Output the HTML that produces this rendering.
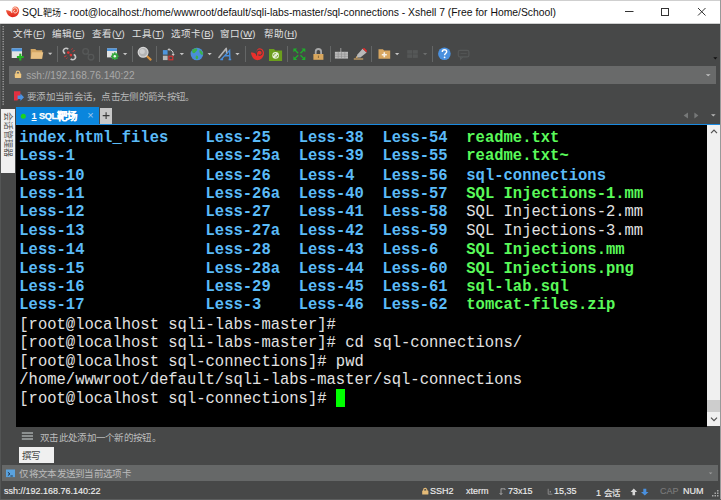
<!DOCTYPE html>
<html lang="zh-CN"><head><meta charset="utf-8">
<style>
*{margin:0;padding:0;box-sizing:border-box}
html,body{width:721px;height:500px;overflow:hidden;background:#474848;font-family:"Liberation Sans",sans-serif;position:relative}
.a{position:absolute;white-space:nowrap}
#title{left:0;top:0;width:721px;height:23.7px;background:#fff;border-top:1px solid #cfcfcf;}
#title .t{left:22px;top:4.8px;font-size:10.36px;color:#111}
.menu{top:26px;font-size:9.5px;color:#e0e0e0}
.menu u{text-decoration-thickness:0.8px;text-underline-offset:1px}
#addr{left:9px;top:66px;width:707px;height:18px;background:#696a6a}
#addr .t{left:17.2px;top:4px;font-size:10.1px;color:#a8a8a8}
#hint{left:27px;top:89.2px;font-size:9.5px;color:#b8b8b8;letter-spacing:-0.7px}
#tab{left:16.3px;top:107px;width:82.6px;height:18px;background:#0a86dd}
#tab .n{left:15.3px;top:3.6px;font-size:9.2px;color:#fff;font-weight:bold;text-decoration:underline;}
#tab .t{left:22.6px;top:-0.2px;font-size:9.2px;letter-spacing:-0.3px;-webkit-text-stroke-width:0.25px;color:#fff;font-weight:bold}
#tab .x{left:71px;top:2px;font-size:11px;color:#9cc8ee}
#plus{left:100px;top:108px;width:12px;height:16px;background:#c8c8c8}
#tabline{left:16px;top:123.5px;width:705px;height:1.5px;background:#1a8ae0}
#side{left:1px;top:109px;width:14px;height:64px;background:#f0f0f0}
#side .t{left:-17px;top:20px;width:48px;font-size:9px;color:#555;transform:rotate(90deg);letter-spacing:0px}
#term{left:16.3px;top:125px;width:691px;height:301.6px;background:#000}
#scroll{left:707px;top:125px;width:13px;height:301.3px;background:#f0f0f0}
#thumb{left:707px;top:400px;width:13px;height:12px;background:#cdcdcd}
pre{position:absolute;left:19.3px;top:129.4px;font-family:"Liberation Mono",monospace;font-size:15.525px;line-height:17.26px;color:#e2e2e2;transform:scaleY(1.08);transform-origin:0 0}
.b{color:#5bbbf8;font-weight:bold}
.g{color:#5afa5a;font-weight:bold}
#cur{left:336px;top:389px;width:9.3px;height:17.8px;background:#00ff00}
#quick{left:40px;top:430px;font-size:9.5px;color:#bdbdbd;letter-spacing:-0.7px}
#compose{left:19px;top:447.3px;width:35px;height:16px;background:#f0f0f0}
#compose span{position:absolute;left:2.6px;top:0.5px;font-size:9.5px;color:#444;letter-spacing:-0.7px}
#send{left:2px;top:464.8px;width:716px;height:16.4px;background:#666868}
#send .t{left:17.4px;top:1.5px;font-size:9.5px;color:#bcbcbc;letter-spacing:-0.7px}
.st{top:486.4px;font-size:9px;color:#ececec;-webkit-text-stroke-width:0.15px}
svg{position:absolute;left:0;top:0}
</style></head><body>
<div id="title" class="a"><div class="t a">SQL<span style="font-size:9px">靶场</span> - root@localhost:/home/wwwroot/default/sqli-labs-master/sql-connections - Xshell 7 (Free for Home/School)</div></div>
<div class="a menu" style="left:13px">文件(<u>F</u>)</div>
<div class="a menu" style="left:52px">编辑(<u>E</u>)</div>
<div class="a menu" style="left:92px">查看(<u>V</u>)</div>
<div class="a menu" style="left:132px">工具(<u>T</u>)</div>
<div class="a menu" style="left:171px">选项卡(<u>B</u>)</div>
<div class="a menu" style="left:220px">窗口(<u>W</u>)</div>
<div class="a menu" style="left:264px">帮助(<u>H</u>)</div>

<div id="addr" class="a"><div class="t a">ssh://192.168.76.140:22</div></div>
<div id="hint" class="a">要添加当前会话，点击左侧的箭头按钮。</div>

<div id="side" class="a"><div class="t a">会话管理器</div></div>
<div id="tab" class="a"><span class="n a">1</span><span class="t a">SQL<span style="font-size:10.4px;position:relative;top:1.2px;letter-spacing:0">靶场</span></span><span class="x a">×</span></div>
<div id="plus" class="a"></div>
<div id="tabline" class="a"></div>
<div id="term" class="a"></div>
<div id="scroll" class="a"></div>
<div id="thumb" class="a"></div>
<pre><span class="b">index.html_files</span>    <span class="b">Less-25</span>   <span class="b">Less-38</span>  <span class="b">Less-54</span>  <span class="g">readme.txt</span>
<span class="b">Less-1</span>              <span class="b">Less-25a</span>  <span class="b">Less-39</span>  <span class="b">Less-55</span>  <span class="g">readme.txt~</span>
<span class="b">Less-10</span>             <span class="b">Less-26</span>   <span class="b">Less-4</span>   <span class="b">Less-56</span>  <span class="b">sql-connections</span>
<span class="b">Less-11</span>             <span class="b">Less-26a</span>  <span class="b">Less-40</span>  <span class="b">Less-57</span>  <span class="g">SQL Injections-1.mm</span>
<span class="b">Less-12</span>             <span class="b">Less-27</span>   <span class="b">Less-41</span>  <span class="b">Less-58</span>  SQL Injections-2.mm
<span class="b">Less-13</span>             <span class="b">Less-27a</span>  <span class="b">Less-42</span>  <span class="b">Less-59</span>  SQL Injections-3.mm
<span class="b">Less-14</span>             <span class="b">Less-28</span>   <span class="b">Less-43</span>  <span class="b">Less-6</span>   <span class="g">SQL Injections.mm</span>
<span class="b">Less-15</span>             <span class="b">Less-28a</span>  <span class="b">Less-44</span>  <span class="b">Less-60</span>  <span class="g">SQL Injections.png</span>
<span class="b">Less-16</span>             <span class="b">Less-29</span>   <span class="b">Less-45</span>  <span class="b">Less-61</span>  <span class="g">sql-lab.sql</span>
<span class="b">Less-17</span>             <span class="b">Less-3</span>    <span class="b">Less-46</span>  <span class="b">Less-62</span>  <span class="g">tomcat-files.zip</span>
[root@localhost sqli-labs-master]#
[root@localhost sqli-labs-master]# cd sql-connections/
[root@localhost sql-connections]# pwd
/home/wwwroot/default/sqli-labs-master/sql-connections
[root@localhost sql-connections]# </pre>
<div id="cur" class="a"></div>

<div id="quick" class="a">双击此处添加一个新的按钮。</div>
<div id="compose" class="a"><span>撰写</span></div>
<div id="send" class="a"><div class="t a">仅将文本发送到当前选项卡</div></div>
<div class="a st" style="left:4px">ssh://192.168.76.140:22</div>
<div class="a st" style="left:430px">SSH2</div>
<div class="a st" style="left:466px">xterm</div>
<div class="a st" style="left:508px">73x15</div>
<div class="a st" style="left:554px">15,35</div>
<div class="a st" style="left:596px">1 <span style="font-size:8.4px;position:relative;top:-0.6px">会话</span></div>
<div class="a st" style="left:660px;color:#7a7a7a">CAP</div>
<div class="a st" style="left:683px">NUM</div>

<svg width="721" height="500" viewBox="0 0 721 500">
<defs>
<linearGradient id="shg" x1="0" y1="0" x2="0" y2="1"><stop offset="0" stop-color="#f47a58"/><stop offset="0.55" stop-color="#ec4a34"/><stop offset="1" stop-color="#e0241c"/></linearGradient>
</defs>
<!-- title logo -->
<path d="M6,10.3 C8.5,9.8 10.8,11 12,12.8 C11.3,9 12.8,6.4 15.2,6.4 C17.6,6.4 19.2,8.4 19.2,10.8 C19.2,14.6 16,17.2 12.6,17.2 C9.2,17.2 6.8,14.2 6,10.3 Z" fill="url(#shg)"/>
<path d="M11.9,13 C11.3,9.2 13.3,7.6 15.3,7.8 C17.3,8.1 17.9,10.3 17.2,11.7 C16.4,13.1 14.6,13.3 13.8,12.3 C13.2,11.4 13.8,10.2 15,10.4" stroke="#ffe2da" stroke-width="1" fill="none"/>
<!-- window controls -->
<line x1="625" y1="11.5" x2="633.5" y2="11.5" stroke="#333" stroke-width="1"/>
<rect x="661.5" y="8.5" width="7" height="7" fill="none" stroke="#333" stroke-width="1"/>
<path d="M698,8 L705.5,15.5 M705.5,8 L698,15.5" stroke="#333" stroke-width="1"/>
<!-- right border -->
<line x1="0" y1="24.2" x2="721" y2="24.2" stroke="#3e4040" stroke-width="0.8"/>
<line x1="720.5" y1="0" x2="720.5" y2="500" stroke="#9a9a9a" stroke-width="1"/>
<line x1="0.5" y1="24" x2="0.5" y2="500" stroke="#545656" stroke-width="1"/>
<!-- gripper -->
<line x1="3.2" y1="26" x2="3.2" y2="105" stroke="#9a9a9a" stroke-width="1.5" stroke-dasharray="1.2 1.3"/>
<!-- separators -->
<g stroke="#646666" stroke-width="1">
<line x1="57.5" y1="46" x2="57.5" y2="62"/><line x1="99.5" y1="46" x2="99.5" y2="62"/>
<line x1="132.5" y1="46" x2="132.5" y2="62"/><line x1="156.5" y1="46" x2="156.5" y2="62"/>
<line x1="245.5" y1="46" x2="245.5" y2="62"/><line x1="287.5" y1="46" x2="287.5" y2="62"/>
<line x1="330.5" y1="46" x2="330.5" y2="62"/><line x1="371.5" y1="46" x2="371.5" y2="62"/>
<line x1="432.5" y1="46" x2="432.5" y2="62"/>
</g>
<!-- dropdowns -->
<g fill="#c4c4c4">
<path d="M48,52.8 h4.3 l-2.15,2.3z"/><path d="M123,53 h4.3 l-2.15,2.3z"/>
<path d="M179.7,53 h4.3 l-2.15,2.2z"/><path d="M207.5,53 h4.3 l-2.15,2.2z"/>
<path d="M235.3,53 h4.3 l-2.15,2.2z"/><path d="M395,53 h4.3 l-2.15,2.2z"/>
</g>
<path d="M423,53 h4.3 l-2.15,2.2z" fill="#6c6e6e"/>
<!-- new session -->
<rect x="11.7" y="48.3" width="10.3" height="9.7" fill="#e4e4e4"/>
<rect x="11.7" y="48.3" width="10.3" height="3" fill="#4d94dc"/>
<rect x="16.9" y="56" width="6.8" height="2.1" fill="#24b424"/>
<rect x="19.25" y="53.65" width="2.1" height="6.8" fill="#24b424"/>
<!-- folder -->
<path d="M30.7,49 h4.6 l1.2,1.3 h5.8 v8.4 h-11.6z" fill="#d4a764"/>
<path d="M32,52.2 h11.3 l-1.4,6.5 h-11.2z" fill="#e8c184"/>
<!-- disconnect -->
<g fill="none" stroke="#c6c6c6" stroke-width="1.7">
<path d="M68.2,49.3 A2.7,2.7 0 1 0 65.2,53.5"/>
<path d="M70.7,58.7 A2.7,2.7 0 1 0 73.7,54.5"/>
</g>
<circle cx="68.3" cy="52.6" r="1.35" fill="#dc3434"/><circle cx="70.9" cy="55.1" r="1.35" fill="#dc3434"/>
<g stroke="#d83434" stroke-width="1"><path d="M71.4,49.4 l1.2,-0.8 M72.6,51.6 l2.2,-1.2 M64.2,56.8 l2.2,-1 M66.4,58.6 l1,-0.8"/></g>
<!-- disabled link -->
<g fill="none" stroke="#565858" stroke-width="1.3">
<circle cx="85.6" cy="51.4" r="2.8"/><circle cx="91" cy="57.2" r="2.8"/><path d="M87.4,53.4 l1.8,1.8"/>
</g>
<!-- settings -->
<rect x="107" y="48.4" width="10" height="9" fill="#e2e2e2"/>
<rect x="107" y="48.4" width="10" height="2.6" fill="#4d94dc"/>
<circle cx="114.8" cy="56.2" r="2.9" fill="#34a83c"/>
<g stroke="#34a83c" stroke-width="1.5"><path d="M114.8,52.3 v7.8 M110.9,56.2 h7.8 M112.1,53.5 l5.4,5.4 M117.5,53.5 l-5.4,5.4"/></g>
<circle cx="114.8" cy="56.2" r="1.2" fill="#eef4ee"/>
<!-- magnifier -->
<line x1="146.8" y1="56" x2="150.6" y2="59.6" stroke="#d8903c" stroke-width="2.2" stroke-linecap="round"/>
<circle cx="143.1" cy="52.3" r="4.9" fill="#b4b4b4" stroke="#d6d6d6" stroke-width="1.2"/>
<circle cx="142.3" cy="51.4" r="2.5" fill="#cfcfcf"/>
<!-- layout -->
<rect x="162.9" y="50.1" width="4.7" height="4.5" fill="#4d94dc"/>
<rect x="162.9" y="55.7" width="4.7" height="4.4" fill="#b8b8b8"/>
<rect x="168.9" y="56.2" width="3.9" height="3.6" fill="none" stroke="#dc3232" stroke-width="1.1"/>
<path d="M168.6,49.5 A4.3,4.3 0 0 1 173.2,54.2" fill="none" stroke="#c8c8c8" stroke-width="1"/>
<path d="M167.4,49.5 l2,-1.6 v3.2z M171.6,54 h3.2 l-1.6,2z" fill="#c8c8c8"/>
<!-- globe -->
<circle cx="196.9" cy="54" r="6.3" fill="#4a8ed8"/>
<path d="M192,50.5 C193.5,48.6 196,48.2 197.2,49 C197.6,50.4 196.3,51.2 195.4,52.2 C194.8,53.4 193.3,53.4 192.4,52.6 Z" fill="#3cb04a"/>
<path d="M199.8,50 C201.8,50.6 203.2,52.6 203,54.6 C202,55.2 200.8,54.4 200.2,53.2 C199.4,52.2 199,51 199.8,50Z" fill="#3cb04a"/>
<path d="M196.4,55.4 C197.8,55.4 198.6,56.8 198,58.2 C197.4,59.4 196.2,59.6 195.8,58.6 C195.4,57.4 195.6,56 196.4,55.4Z" fill="#3cb04a"/>
<!-- font AA -->
<path d="M218.9,57.4 L226.2,48.4 L226.8,53.5" fill="none" stroke="#b4b4b4" stroke-width="1.6" stroke-linecap="round" stroke-linejoin="round"/>
<path d="M221.3,59.4 L229.6,50.4 L229.9,59.4 M224.4,55.8 h5.4 M220.3,59.5 h2.8 M228.6,59.5 h2.6" fill="none" stroke="#4a8fdc" stroke-width="1.4"/>
<!-- xftp shell -->
<path d="M250.9,52.6 C253.6,52 255.6,53.4 256.6,55 C255.8,51 257.4,48.2 259.8,48.2 C262.4,48.2 264,50.4 264,53 C264,57.2 260.8,60.2 257.2,60.2 C253.6,60.2 251.6,56.6 250.9,52.6Z" fill="#e8302c"/>
<path d="M256.6,55.6 C255.9,51.6 258,49.9 260,50.1 C262,50.4 262.6,52.6 261.9,54 C261.1,55.4 259.3,55.6 258.5,54.6" stroke="#4a4040" stroke-width="1.1" fill="none"/>
<!-- green folder -->
<path d="M269,49 h5 l1.3,1.4 h6.8 v10.5 h-13.1z" fill="#6b9e1c"/>
<circle cx="275.6" cy="55.4" r="3.3" fill="#e6efd8"/>
<path d="M273.6,55.8 C273.4,54.2 274.6,53.4 275.8,53.6 M277.6,55 C277.8,56.6 276.6,57.4 275.4,57.2" stroke="#6b9e1c" stroke-width="0.9" fill="none"/>
<!-- expand arrows -->
<g fill="#1fae2b"><path d="M293.4,48.4 h3.8 l-3.8,3.8z"/><path d="M305.3,48.4 h-3.8 l3.8,3.8z"/><path d="M293.4,60 h3.8 l-3.8,-3.8z"/><path d="M305.3,60 h-3.8 l3.8,-3.8z"/></g>
<g stroke="#1fae2b" stroke-width="1.3"><path d="M295,50 l3.2,3.2 M303.7,50 l-3.2,3.2 M295,58.4 l3.2,-3.2 M303.7,58.4 l-3.2,-3.2"/></g>
<!-- lock -->
<path d="M315.7,54.2 v-2.5 a2.7,2.7 0 0 1 5.4,0 v2.5" fill="none" stroke="#a8a8a8" stroke-width="1.8"/>
<rect x="313.4" y="54" width="10" height="5.8" fill="#d9a75e"/>
<rect x="317.9" y="55.6" width="1" height="2.4" fill="#8a6a3a"/>
<!-- keyboard -->
<line x1="340.8" y1="48" x2="340.8" y2="52" stroke="#9a9a9a" stroke-width="1"/>
<rect x="334.9" y="51.8" width="13.1" height="6.8" fill="#bcbcbc"/>
<g stroke="#8c8c8c" stroke-width="0.6"><path d="M334.9,54.1 h13.1 M334.9,56.3 h13.1 M338.2,51.8 v6.8 M341.5,51.8 v6.8 M344.8,51.8 v6.8"/></g>
<!-- highlighter -->
<rect x="353.8" y="58.4" width="9.4" height="1.2" fill="#d4a868"/>
<path d="M356.5,57.6 L357.4,54.6 L362.6,48.8 L366.6,52.6 L360.4,57.4 Z" fill="#b8b8b8"/>
<path d="M362.4,48.6 L364.4,47.9 L366.9,50.4 L366.6,52.6 Z" fill="#e02a2a"/>
<path d="M355.6,58.2 L356.5,56 L358,57.4Z" fill="#d4a868"/>
<!-- folder plus -->
<path d="M378.5,49.3 h4.4 l1.2,1.3 h6.1 v8.2 h-11.7z" fill="#d8a660"/>
<path d="M384.3,52.2 v5 M381.8,54.7 h5" stroke="#f6f0e6" stroke-width="1.6"/>
<!-- disabled grid -->
<g fill="#555757"><rect x="407.2" y="50.1" width="5" height="3.6"/><rect x="412.8" y="50.1" width="5" height="3.6"/><rect x="407.2" y="54.3" width="5" height="3.6"/><rect x="412.8" y="54.3" width="5" height="3.6"/></g>
<!-- help -->
<circle cx="444.4" cy="53.8" r="6.3" fill="#4a90de"/>
<path d="M442.3,51.9 C442.3,50.4 443.3,49.8 444.5,49.8 C445.8,49.8 446.7,50.6 446.7,51.7 C446.7,53.2 444.6,53.4 444.6,55.2" fill="none" stroke="#fff" stroke-width="1.4"/>
<circle cx="444.6" cy="57.3" r="0.9" fill="#fff"/>
<!-- chat disabled -->
<rect x="458.3" y="50.3" width="10.6" height="6.6" rx="1.6" fill="none" stroke="#565858" stroke-width="1.2"/>
<path d="M460.5,56.9 v2.4 l2.2,-2.4" fill="none" stroke="#565858" stroke-width="1.1"/>
<line x1="460.5" y1="53.6" x2="466.7" y2="53.6" stroke="#565858" stroke-width="0.8"/>
<!-- overflow -->
<path d="M713.3,57.2 h4 l-2,2.2z" fill="#111"/>
<!-- address lock & dropdown -->
<path d="M16.2,74 v-1.2 a1.75,1.75 0 0 1 3.5,0 v1.2" fill="none" stroke="#f0c880" stroke-width="1.2"/>
<rect x="14.8" y="73.6" width="6.4" height="4.3" rx="0.6" fill="#f0c880"/>
<path d="M705.8,74.2 h4.8 l-2.4,2z" fill="#c2c2c2"/>
<!-- hint icon -->
<path d="M14,91.2 h6.4 v5.2 l-3,4.1 h-3.4z" fill="#e23040"/>
<path d="M17.6,95.6 h2.8 v-2 l3.6,3.7 l-3.6,3.7 v-2 h-2.8z" fill="#4a92e2"/>
<!-- tab bits -->
<circle cx="23.3" cy="116.2" r="2.5" fill="#1ed21e"/>
<path d="M106.1,112.2 v6.8 M102.7,115.6 h6.8" stroke="#3a3a3a" stroke-width="1.1"/>
<path d="M688,112.4 v6 l-4.4,-3z" fill="#767878"/>
<path d="M694.4,112.4 v6 l4,-3z" fill="#767878"/>
<path d="M711,114.2 h4.6 l-2.3,2.3z" fill="#b4b4b4"/>
<!-- scroll chevrons -->
<path d="M711,133.2 l3,-3 l3,3" fill="none" stroke="#505050" stroke-width="1.2"/>
<path d="M711,417.6 l3,3 l3,-3" fill="none" stroke="#505050" stroke-width="1.2"/>
<!-- hamburger -->
<g stroke="#8c9090" stroke-width="1.8"><path d="M21.8,433 h11.2 M21.8,436 h11.2 M21.8,439 h11.2"/></g>
<!-- send icon -->
<rect x="6" y="469.5" width="9" height="7.6" fill="#5aa2de"/>
<path d="M7.9,472.3 l2,1.6 l-2,1.6" fill="none" stroke="#1c2c40" stroke-width="1"/>
<line x1="10.4" y1="476" x2="12.8" y2="476" stroke="#1c2c40" stroke-width="0.9"/>
<path d="M708.8,472.4 h3.6 l-1.8,1.9z" fill="#9c9c9c"/>
<line x1="0" y1="499.5" x2="721" y2="499.5" stroke="#5c5e5e" stroke-width="1"/>
<!-- status icons -->
<path d="M423.6,491 v-1 a1.6,1.6 0 0 1 3.2,0 v1" fill="none" stroke="#e6bc78" stroke-width="1.1"/>
<rect x="422.2" y="490.6" width="6.2" height="3.8" rx="0.5" fill="#e6bc78"/>
<path d="M501,488.6 v6 M499.6,493 l1.4,1.6 l1.4,-1.6 M501,488.8 h4 v1.2" fill="none" stroke="#a8a8a8" stroke-width="0.9"/>
<path d="M548.2,488.8 v5.4 h4.2" fill="none" stroke="#8a8a8a" stroke-width="1"/><rect x="549.6" y="491" width="1.4" height="1.6" fill="#8a8a8a"/>
<path d="M633.8,488.6 l3.3,3.3 h-2 v3.4 h-2.6 v-3.4 h-2z" fill="#d8d8d8"/>
<path d="M644.8,495.4 l3.7,-3.3 h-2.2 v-3.4 h-3 v3.4 h-2.3z" fill="#4a90de"/>
<g fill="#a8a8a8"><rect x="717" y="490" width="1.5" height="1.5"/><rect x="714.5" y="492.5" width="1.5" height="1.5"/><rect x="717" y="492.5" width="1.5" height="1.5"/><rect x="712" y="495" width="1.5" height="1.5"/><rect x="714.5" y="495" width="1.5" height="1.5"/><rect x="717" y="495" width="1.5" height="1.5"/></g>

</svg>
</body></html>
